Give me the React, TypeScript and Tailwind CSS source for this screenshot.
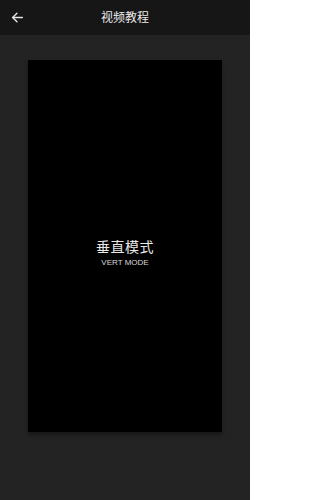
import React from "react";

export default function App() {
  return (
    <div
      className="w-[250px] h-[500px] bg-[#232323] flex flex-col"
      style={{ fontFamily: '"Noto Sans", "Noto Sans CJK SC", sans-serif' }}
    >
      <div className="h-[35px] bg-[#161616] flex items-center relative shrink-0">
        <svg
          className="absolute left-[11px] top-[11px]"
          width="13"
          height="13"
          viewBox="0 0 24 24"
          fill="none"
          stroke="#e6e6e6"
          strokeWidth="2.6"
          strokeLinecap="round"
          strokeLinejoin="round"
        >
          <path d="M21 12H4" />
          <path d="M11 4l-8 8 8 8" />
        </svg>
        <div className="flex-1 text-center text-[12px] text-[#ececec] leading-none">视频教程</div>
      </div>
      <div className="px-[28px] pt-[25px]">
        <div className="h-[372px] bg-black flex flex-col items-center justify-center shadow-[0_3px_4px_rgba(0,0,0,0.35)]">
          <div className="text-[14px] text-[#e8e8e8] leading-none tracking-[0.5px] mt-[14px]">垂直模式</div>
          <div
            className="text-[8px] text-[#d8d8d8] leading-none mt-[5px]"
            style={{ fontFamily: '"Liberation Sans", sans-serif' }}
          >
            VERT MODE
          </div>
        </div>
      </div>
    </div>
  );
}
